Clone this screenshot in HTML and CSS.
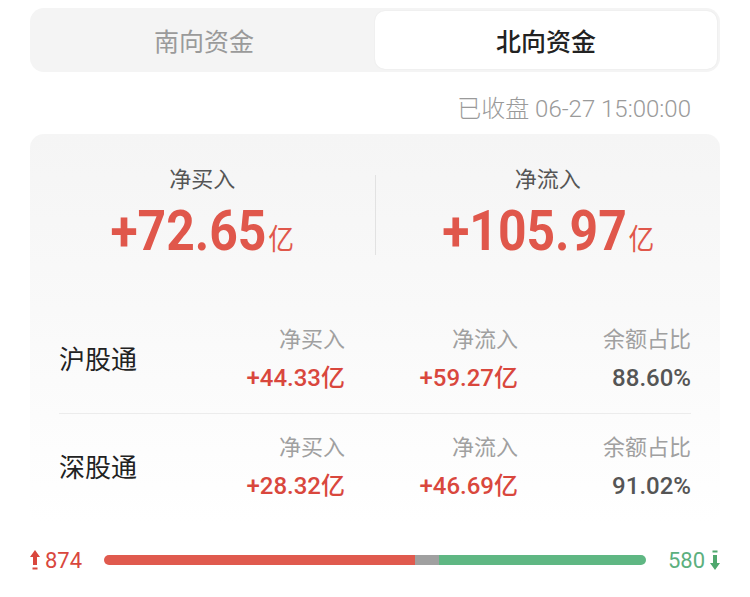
FILE: index.html
```html
<!DOCTYPE html>
<html lang="zh">
<head>
<meta charset="utf-8">
<link rel="stylesheet" href="styles.css">
</head>
<body>
<div class="tabs">
  <div class="tab">南向资金</div>
  <div class="tab active">北向资金</div>
</div>
<div class="stamp">已收盘 06-27 15:00:00</div>
<div class="card">
  <div class="summary">
    <div class="sum-col">
      <div class="sum-label">净买入</div>
      <div class="sum-value"><span class="num">+72.65</span><span class="unit">亿</span></div>
    </div>
    <div class="sum-divider"></div>
    <div class="sum-col">
      <div class="sum-label">净流入</div>
      <div class="sum-value"><span class="num">+105.97</span><span class="unit">亿</span></div>
    </div>
  </div>
  <div class="row">
    <div class="row-name">沪股通</div>
    <div class="cell"><div class="cell-label">净买入</div><div class="cell-value red">+44.33亿</div></div>
    <div class="cell"><div class="cell-label">净流入</div><div class="cell-value red">+59.27亿</div></div>
    <div class="cell"><div class="cell-label">余额占比</div><div class="cell-value grey">88.60%</div></div>
  </div>
  <div class="row">
    <div class="row-name">深股通</div>
    <div class="cell"><div class="cell-label">净买入</div><div class="cell-value red">+28.32亿</div></div>
    <div class="cell"><div class="cell-label">净流入</div><div class="cell-value red">+46.69亿</div></div>
    <div class="cell"><div class="cell-label">余额占比</div><div class="cell-value grey">91.02%</div></div>
  </div>
</div>
<div class="breadth">
  <div class="count up">
    <svg class="arrow" width="10" height="24" viewBox="0 0 10 24"><path d="M5 2 L10 9 L7 9 L7 17 L3 17 L3 9 L0 9 Z" fill="#d9473d"/><rect x="2.5" y="19.5" width="5" height="2" fill="#d9473d"/></svg>
    <span>874</span>
  </div>
  <div class="bar">
    <div class="seg seg-up" style="width:57.3%"></div>
    <div class="seg seg-flat" style="width:4.6%"></div>
    <div class="seg seg-down"></div>
  </div>
  <div class="count down">
    <span>580</span>
    <svg class="arrow" width="10" height="24" viewBox="0 0 10 24"><rect x="2.5" y="2.5" width="5" height="2" fill="#4fa86e"/><path d="M3 7 L7 7 L7 15 L10 15 L5 22 L0 15 L3 15 Z" fill="#4fa86e"/></svg>
  </div>
</div>
</body>
</html>
```
FILE: styles.css
```css
* { box-sizing: border-box; }
body {
  margin: 0;
  background: #fff;
  font-family: "Noto Sans CJK SC", "Noto Sans", sans-serif;
  width: 750px;
}
.tabs {
  margin: 8px 30px 0;
  height: 64px;
  background: #f4f4f4;
  border-radius: 14px;
  padding: 3px;
  display: flex;
}
.tab {
  flex: 1;
  text-align: center;
  font-size: 25px;
  line-height: 58px;
  color: #9a9a9a;
}
.tab.active {
  background: #fff;
  border-radius: 10px;
  color: #222;
  font-weight: 500;
  box-shadow: 0 0 2px rgba(0,0,0,0.07);
}
.stamp {
  margin-top: 22px;
  padding-right: 59px;
  text-align: right;
  font-size: 24px;
  font-weight: 300;
  line-height: 30px;
  color: #9a9a9a;
  font-family: Roboto, "Noto Sans CJK SC", sans-serif;
}
.card {
  margin: 10px 30px 0;
  border-radius: 14px;
  background: linear-gradient(#f5f5f5 0%, #f9f9f9 45%, #fff 100%);
  padding: 0 29px;
}
.summary {
  display: flex;
  align-items: flex-start;
  margin: 0 -29px;
  padding-top: 28px;
  height: 168px;
}
.sum-col {
  flex: 1;
  text-align: center;
}
.sum-divider {
  width: 1px;
  height: 80px;
  background: #e2e2e2;
  margin-top: 13px;
}
.sum-label {
  font-size: 22px;
  line-height: 30px;
  color: #555;
}
.sum-value {
  color: #e0574b;
  line-height: 60px;
  margin-top: 9px;
  transform: scaleX(0.89);
}
.num {
  font-family: Roboto, sans-serif;
  font-size: 56px;
  font-weight: 700;
}
.unit {
  font-size: 29px;
  font-weight: 400;
  margin-left: 2px;
}
.row {
  display: grid;
  grid-template-columns: 1fr 173px 173px 173px;
  align-items: center;
  height: 111px;
}
.row + .row {
  border-top: 1px solid #ececec;
  height: 110px;
  padding-bottom: 6px;
}
.row-name {
  font-size: 26px;
  color: #222;
}
.cell { text-align: right; }
.cell-label {
  font-size: 22px;
  line-height: 30px;
  color: #a0a0a0;
}
.cell-value {
  font-family: Roboto, "Noto Sans CJK SC", sans-serif;
  font-size: 24px;
  line-height: 30px;
  margin-top: 11px;
  font-weight: 500;
}
.cell-value.red { color: #d9473d; }
.cell-value.grey { color: #555; }
.breadth {
  display: flex;
  align-items: center;
  margin: 22px 30px 0;
  height: 30px;
}
.count {
  display: flex;
  align-items: center;
  gap: 5px;
  font-family: Roboto, sans-serif;
  font-size: 22px;
  width: 74px;
}
.count.up { color: #d9473d; }
.count.down { color: #5cb07e; justify-content: flex-end; }
.bar {
  flex: 1;
  height: 10px;
  border-radius: 5px;
  overflow: hidden;
  display: flex;
}
.seg { height: 100%; }
.seg-up { background: #e05a4e; }
.seg-flat { background: #a0a0a0; }
.seg-down { background: #5fb783; flex: 1; }
```
